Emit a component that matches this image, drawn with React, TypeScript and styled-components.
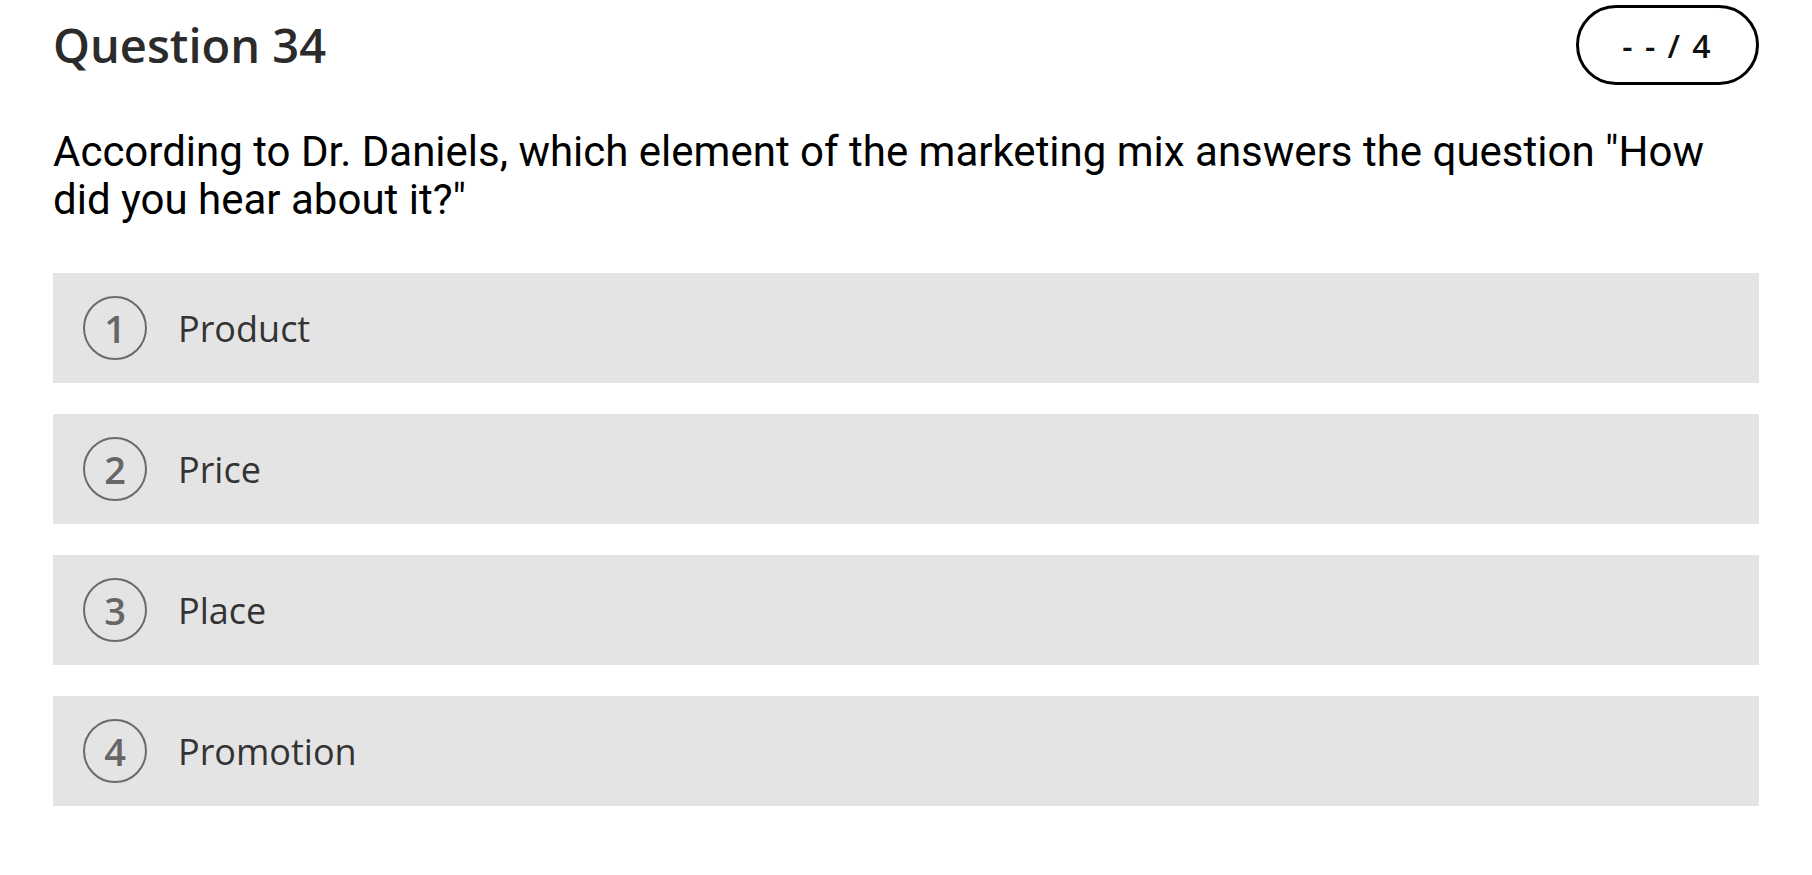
import styled, { createGlobalStyle } from 'styled-components';

const GlobalStyle = createGlobalStyle`
  body {
    margin: 0;
    background: #ffffff;
    font-family: 'Open Sans', 'Liberation Sans', sans-serif;
  }
`;

const OPTIONS = ['Product', 'Price', 'Place', 'Promotion'];

const App = () => {
  return (
    <>
      <GlobalStyle />
      <Page>
        <Header>
          <Title>Question 34</Title>
          <ScoreBadge>- - / 4</ScoreBadge>
        </Header>
        <Prompt>
          According to Dr. Daniels, which element of the marketing mix answers
          the question "How did you hear about it?"
        </Prompt>
        <OptionList>
          {OPTIONS.map((label, i) => (
            <Option key={label}>
              <OptionNumber>{i + 1}</OptionNumber>
              <OptionLabel>{label}</OptionLabel>
            </Option>
          ))}
        </OptionList>
      </Page>
    </>
  );
};

const Page = styled.main`
  padding: 5px 53px 40px;
`;

const Header = styled.header`
  display: flex;
  justify-content: space-between;
  align-items: center;
  height: 80px;
`;

const Title = styled.h1`
  margin: 0;
  font-family: 'Open Sans', sans-serif;
  font-size: 47px;
  font-weight: 600;
  color: #2b2b2b;
`;

const ScoreBadge = styled.div`
  box-sizing: border-box;
  width: 183px;
  height: 80px;
  border: 3px solid #000;
  border-radius: 40px;
  display: flex;
  align-items: center;
  justify-content: center;
  font-family: 'Open Sans', sans-serif;
  font-size: 32px;
  font-weight: 600;
  letter-spacing: 2px;
  color: #111;
`;

const Prompt = styled.p`
  margin: 43px 0 0;
  font-family: Roboto, 'Liberation Sans', sans-serif;
  font-size: 42px;
  line-height: 48px;
  color: #000;
`;

const OptionList = styled.ol`
  list-style: none;
  margin: 49px 0 0;
  padding: 0;
  display: flex;
  flex-direction: column;
  gap: 31px;
`;

const Option = styled.li`
  height: 110px;
  box-sizing: border-box;
  padding-left: 30px;
  display: flex;
  align-items: center;
  gap: 31px;
  background: #e4e4e4;
`;

const OptionNumber = styled.span`
  box-sizing: border-box;
  width: 64px;
  height: 64px;
  border: 2px solid #6a6a6a;
  border-radius: 50%;
  display: flex;
  align-items: center;
  justify-content: center;
  font-family: 'Open Sans', sans-serif;
  font-size: 38px;
  font-weight: 600;
  color: #666;
`;

const OptionLabel = styled.span`
  font-family: 'Open Sans', sans-serif;
  font-size: 36px;
  color: #333;
`;

export default App;
